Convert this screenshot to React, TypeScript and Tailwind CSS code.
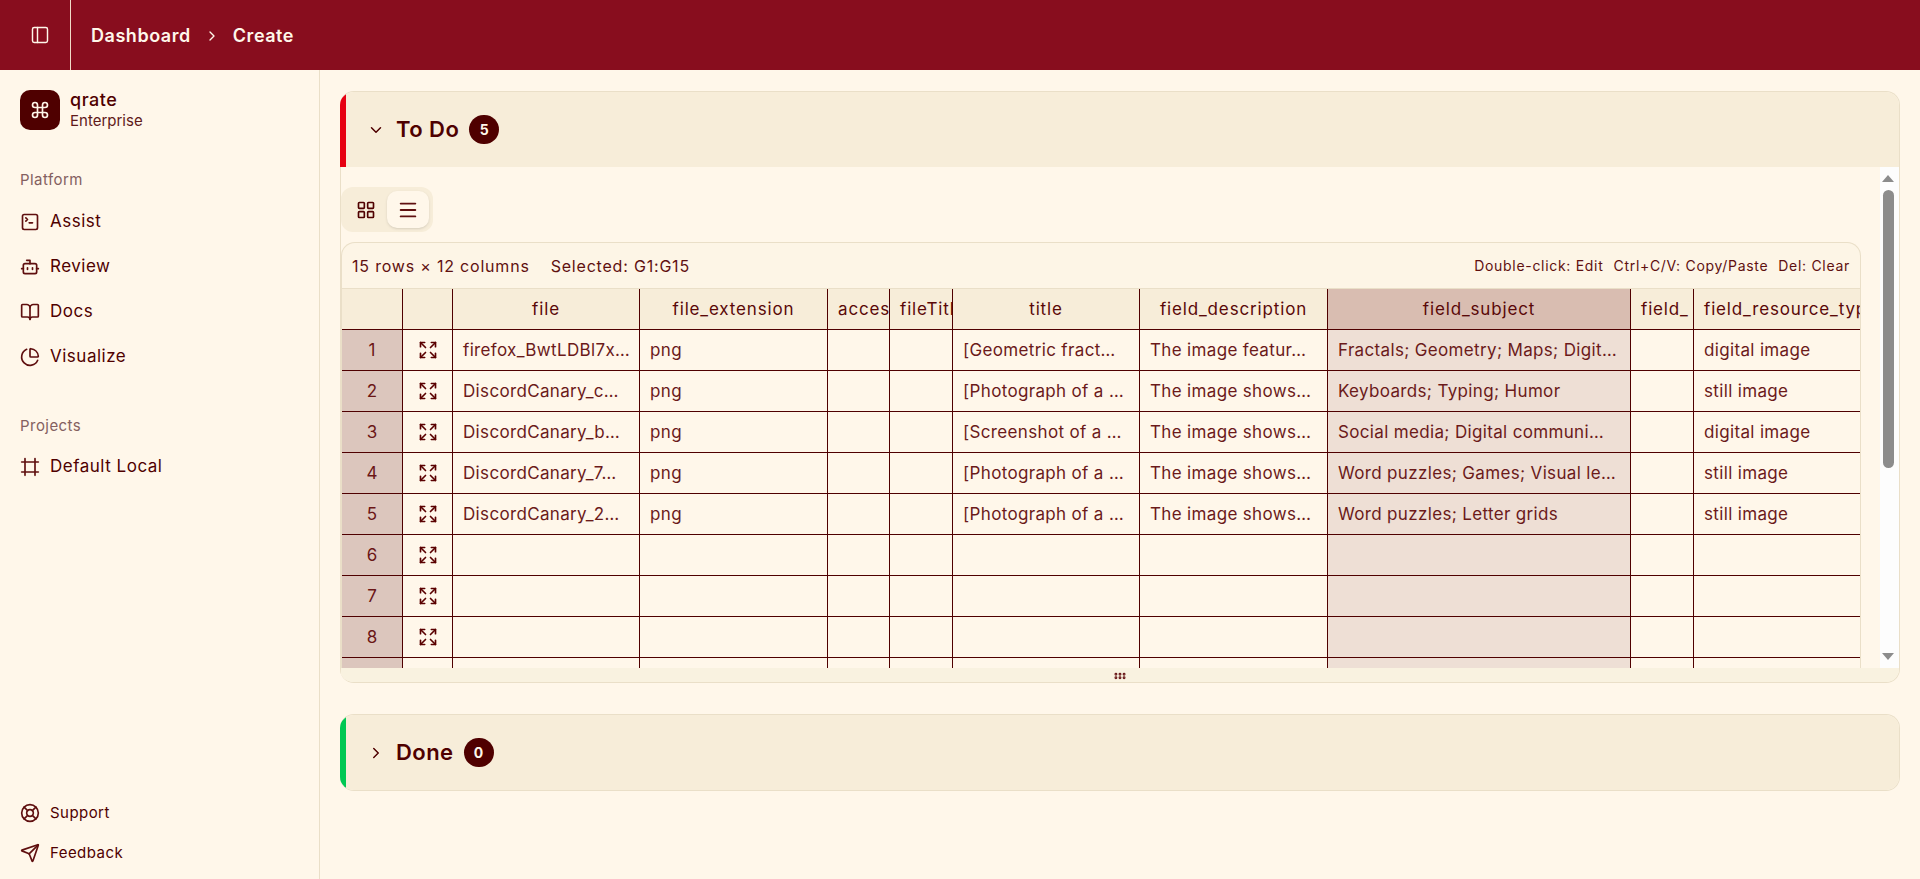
import {
  BookOpen,
  Bot,
  ChartPie,
  ChevronDown,
  ChevronRight,
  Command,
  Expand,
  Frame,
  GripHorizontal,
  LayoutGrid,
  LifeBuoy,
  Menu,
  PanelLeft,
  Send,
  SquareTerminal,
} from 'lucide-react';
import type { ReactNode } from 'react';

const platform = [
  { label: 'Assist', icon: SquareTerminal },
  { label: 'Review', icon: Bot },
  { label: 'Docs', icon: BookOpen },
  { label: 'Visualize', icon: ChartPie },
];

const headers = [
  { label: 'file', center: true },
  { label: 'file_extension', center: true },
  { label: 'access', center: false },
  { label: 'fileTitle', center: false },
  { label: 'title', center: true },
  { label: 'field_description', center: true },
  { label: 'field_subject', center: true, selected: true },
  { label: 'field_', center: false },
  { label: 'field_resource_type', center: false },
];

const rows = [
  ['firefox_BwtLDBl7x…', 'png', '', '', '[Geometric fract…', 'The image featur…', 'Fractals; Geometry; Maps; Digit…', '', 'digital image'],
  ['DiscordCanary_c…', 'png', '', '', '[Photograph of a …', 'The image shows…', 'Keyboards; Typing; Humor', '', 'still image'],
  ['DiscordCanary_b…', 'png', '', '', '[Screenshot of a …', 'The image shows…', 'Social media; Digital communi…', '', 'digital image'],
  ['DiscordCanary_7…', 'png', '', '', '[Photograph of a …', 'The image shows…', 'Word puzzles; Games; Visual le…', '', 'still image'],
  ['DiscordCanary_2…', 'png', '', '', '[Photograph of a …', 'The image shows…', 'Word puzzles; Letter grids', '', 'still image'],
  ...Array.from({ length: 10 }, () => ['', '', '', '', '', '', '', '', '']),
];

const gridCols =
  'grid grid-cols-[61px_50px_187px_188px_62px_63px_187px_188px_303px_63px_188px] w-max';

function Badge({ children }: { children: ReactNode }) {
  return (
    <span className="flex items-center justify-center w-[30px] h-[29px] rounded-full bg-[#4f0000] text-[#fff7ea] text-[14px] font-bold">
      {children}
    </span>
  );
}

function Sidebar() {
  return (
    <aside className="w-[320px] shrink-0 border-r border-[#eadfc8] flex flex-col px-5 pt-5 pb-[6px] text-[#4f0000]">
      {/* Team */}
      <div className="flex items-center gap-[10px] h-10">
        <div className="w-10 h-10 rounded-[10px] bg-[#4f0000] flex items-center justify-center text-[#fff7ea]">
          <Command size={20} />
        </div>
        <div className="flex flex-col">
          <span className="text-[18px] leading-[20px] font-medium tracking-[0.03em]">qrate</span>
          <span className="mt-[1px] text-[15px] leading-[20px] text-[#5f1a1a]">Enterprise</span>
        </div>
      </div>

      <div className="mt-[40px] text-[15px] leading-5 text-[#846060] tracking-[0.03em]">Platform</div>
      <nav className="mt-[9px] flex flex-col">
        {platform.map(({ label, icon: Icon }) => (
          <div key={label} className="h-[45px] flex items-center gap-[10px] text-[17px] tracking-[0.03em]">
            <Icon size={20} className="text-[#5f0f0f]" />
            {label}
          </div>
        ))}
      </nav>

      <div className="mt-[37px] text-[15px] leading-5 text-[#846060] tracking-[0.03em]">Projects</div>
      <div className="mt-[8px] h-[45px] flex items-center gap-[10px] text-[17px] tracking-[0.03em]">
        <Frame size={20} className="text-[#5f0f0f]" />
        Default Local
      </div>

      <div className="mt-auto flex flex-col">
        <div className="h-[40px] flex items-center gap-[10px] text-[15px] tracking-[0.03em]">
          <LifeBuoy size={20} className="text-[#5f0f0f]" />
          Support
        </div>
        <div className="h-[40px] flex items-center gap-[10px] text-[15px] tracking-[0.03em]">
          <Send size={20} className="text-[#5f0f0f]" />
          Feedback
        </div>
      </div>
    </aside>
  );
}

function Table() {
  return (
    <div className="w-[1520px] shrink-0 border border-b-0 border-[#eadfc8] rounded-t-[14px] bg-[#fdf5e6] overflow-hidden flex flex-col">
      {/* Info bar */}
      <div className="h-[46px] shrink-0 flex items-center justify-between pl-[10px] pr-[10px] border-b border-[#eadfc8] text-[#5f1010]">
        <div className="flex gap-[21px] text-[16px] tracking-[0.05em]">
          <span>15 rows × 12 columns</span>
          <span>Selected: G1:G15</span>
        </div>
        <div className="flex gap-[10px] text-[14px] tracking-[0.05em]">
          <span>Double-click: Edit</span>
          <span>Ctrl+C/V: Copy/Paste</span>
          <span>Del: Clear</span>
        </div>
      </div>

      {/* Grid */}
      <div className="flex-1 min-h-0 overflow-hidden bg-[#fff7ea] text-[17px]">
        <div className={gridCols}>
          <div className="h-[41px] bg-[#f7edd9] border-r border-b border-[#4f0000]" />
          <div className="h-[41px] bg-[#f7edd9] border-r border-b border-[#4f0000]" />
          {headers.map((h) => (
            <div
              key={h.label}
              className={`h-[41px] px-[10px] pt-[1px] flex items-center overflow-hidden whitespace-nowrap border-r border-b border-[#4f0000] text-[#5a0808] tracking-[0.05em] ${
                h.center ? 'justify-center' : 'justify-start'
              } ${h.selected ? 'bg-[#d9bdb1]' : 'bg-[#f7edd9]'}`}
            >
              {h.label}
            </div>
          ))}
          {rows.map((row, r) => (
            <div key={r} className="contents">
              <div className="h-[41px] pt-[1px] flex items-center justify-center bg-[#dcc6bd] border-r border-b border-[#4f0000] text-[#6b1616] text-[17px]">
                {r + 1}
              </div>
              <div className="h-[41px] flex items-center justify-center border-r border-b border-[#4f0000] text-[#5a0000]">
                <Expand size={20} strokeWidth={2} />
              </div>
              {row.map((cell, c) => (
                <div
                  key={c}
                  className={`h-[41px] px-[10px] pt-[1px] flex items-center overflow-hidden whitespace-nowrap border-r border-b border-[#4f0000] text-[#6b1a1a] tracking-[0.02em] ${
                    c === 6 ? 'bg-[#eedfd5]' : ''
                  }`}
                >
                  {cell}
                </div>
              ))}
            </div>
          ))}
        </div>
      </div>
    </div>
  );
}

function Scrollbar() {
  return (
    <div className="w-[19px] shrink-0 bg-[#fdfdfd] flex flex-col items-center pr-[3px] pt-[8px] pb-[8px]">
      <div className="w-0 h-0 border-x-[6px] border-x-transparent border-b-[7px] border-b-[#8c8c8c]" />
      <div className="mt-[8px] w-[11px] h-[278px] rounded-full bg-[#8c8c8c]" />
      <div className="mt-auto w-0 h-0 border-x-[6px] border-x-transparent border-t-[7px] border-t-[#8c8c8c]" />
    </div>
  );
}

export default function App() {
  return (
    <div className="h-[879px] w-[1920px] overflow-hidden flex flex-col bg-[#fff7ea] text-[#4f0000] font-['Inter',sans-serif]">
      {/* Header */}
      <header className="h-[70px] shrink-0 bg-[#880d1e] flex items-center text-[#fff7ea]">
        <div className="w-[71px] h-full flex items-center pl-[30px] border-r border-[#f0dcc8]">
          <PanelLeft size={20} strokeWidth={1.75} />
        </div>
        <div className="ml-[20px] pt-[1px] flex items-center text-[18px] font-semibold tracking-[0.03em]">
          <span>Dashboard</span>
          <ChevronRight size={16} className="mx-[13px]" />
          <span>Create</span>
        </div>
      </header>

      <div className="flex-1 min-h-0 flex">
        <Sidebar />

        {/* Main */}
        <main className="flex-1 min-w-0 pl-[20px] pr-[20px] pt-[21px] flex flex-col gap-[31px]">
          {/* To Do */}
          <section className="h-[592px] shrink-0 border border-[#eadfc8] rounded-[14px] overflow-hidden flex flex-col border-l-0">
            <div className="h-[75px] shrink-0 bg-[#f7edd9] border-l-[6px] border-l-[#e60012] flex items-center pl-[21px] gap-[10px]">
              <ChevronDown size={18} strokeWidth={2} />
              <h2 className="ml-[1px] text-[22px] font-semibold tracking-[0.02em] text-[#4f0000]">To Do</h2>
              <Badge>5</Badge>
            </div>
            <div className="h-[501px] shrink-0 flex border-l border-[#eadfc8]">
              <div className="flex-1 min-w-0 flex flex-col pt-[20px]">
                <div className="w-[92px] h-[45px] shrink-0 rounded-[12px] bg-[#f7edd9] flex items-center pl-[4px]">
                  <div className="w-[42px] h-[37px] flex items-center justify-center">
                    <LayoutGrid size={20} />
                  </div>
                  <div className="w-[42px] h-[37px] rounded-[10px] bg-[#fff7ea] shadow flex items-center justify-center">
                    <Menu size={22} className="text-[#5f1010]" />
                  </div>
                </div>
                <div className="mt-[10px] flex-1 min-h-0 flex">
                  <Table />
                </div>
              </div>
              <Scrollbar />
            </div>
            <div className="h-[15px] shrink-0 bg-[#f9f2e0] border-l border-[#eadfc8] flex items-center justify-center">
              <GripHorizontal size={14} strokeWidth={3} className="text-[#6b1a1a]" />
            </div>
          </section>

          {/* Done */}
          <section className="h-[77px] shrink-0 rounded-[14px] border border-[#eadfc8] border-l-0 overflow-hidden">
            <div className="h-full bg-[#f7edd9] border-l-[6px] border-l-[#00c853] flex items-center pl-[21px] gap-[10px]">
              <ChevronRight size={18} strokeWidth={2} />
              <h2 className="ml-[1px] text-[22px] font-semibold tracking-[0.02em] text-[#4f0000]">Done</h2>
              <Badge>0</Badge>
            </div>
          </section>
        </main>
      </div>
    </div>
  );
}
